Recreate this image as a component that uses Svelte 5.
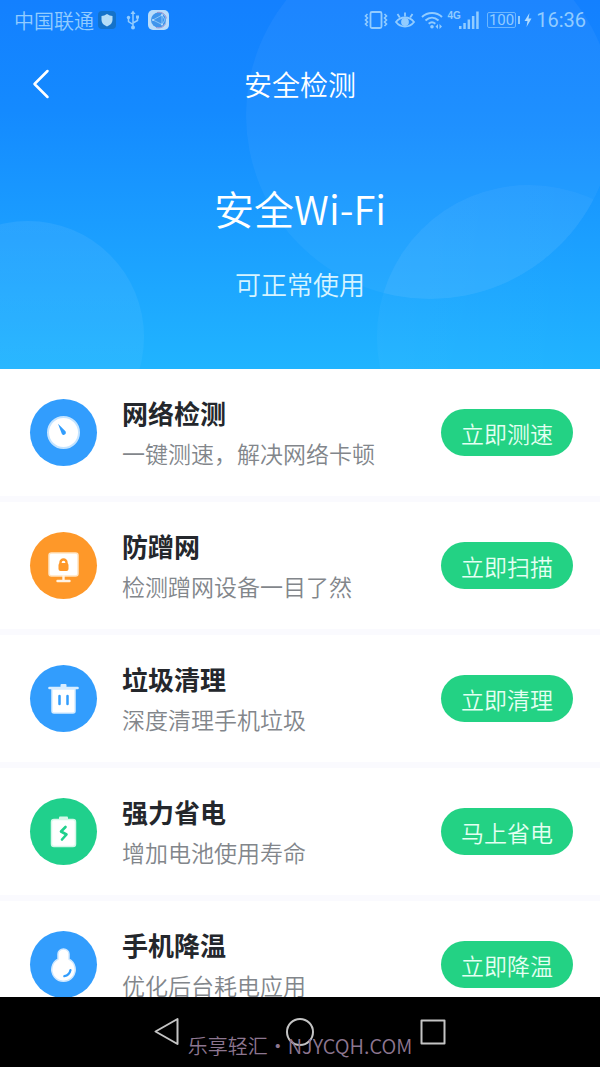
<script lang="ts">
	type Tool = {
		icon: string;
		color: string;
		title: string;
		desc: string;
		action: string;
	};

	const tools: Tool[] = [
		{ icon: 'gauge', color: '#329dfd', title: '网络检测', desc: '一键测速，解决网络卡顿', action: '立即测速' },
		{ icon: 'monitor', color: '#fe9829', title: '防蹭网', desc: '检测蹭网设备一目了然', action: '立即扫描' },
		{ icon: 'trash', color: '#329dfd', title: '垃圾清理', desc: '深度清理手机垃圾', action: '立即清理' },
		{ icon: 'battery', color: '#20d08c', title: '强力省电', desc: '增加电池使用寿命', action: '马上省电' },
		{ icon: 'cooling', color: '#329dfd', title: '手机降温', desc: '优化后台耗电应用', action: '立即降温' }
	];
</script>

<div class="screen">
	<header class="hero">
		<svg class="bubbles" viewBox="0 0 600 369" preserveAspectRatio="xMidYMax slice" aria-hidden="true">
			<defs>
				<linearGradient id="fade" x1="0" y1="0" x2="0" y2="1">
					<stop offset="0" stop-color="#fff" stop-opacity="0.07" />
					<stop offset="1" stop-color="#fff" stop-opacity="0.03" />
				</linearGradient>
				<linearGradient id="fade-right" x1="0" y1="0" x2="1" y2="0">
					<stop offset="0" stop-color="#fff" stop-opacity="0.03" />
					<stop offset="0.7" stop-color="#fff" stop-opacity="0" />
				</linearGradient>
				<clipPath id="overlap">
					<circle cx="430" cy="115" r="184" />
				</clipPath>
			</defs>
			<circle cx="430" cy="115" r="184" fill="#fff" fill-opacity="0.045" />
			<circle cx="529" cy="337" r="152" fill="url(#fade-right)" />
			<circle cx="529" cy="337" r="152" fill="#fff" fill-opacity="0.035" clip-path="url(#overlap)" />
			<circle cx="28" cy="337" r="116" fill="url(#fade)" />
		</svg>

		<div class="status-bar">
			<div class="status-group">
				<span class="carrier">中国联通</span>
				<svg width="18" height="20" viewBox="0 0 18 20" aria-hidden="true">
					<rect x="0" y="1" width="18" height="18" rx="4" fill="#1472c9" />
					<path d="M9 4c2 1.400 3.500 1.800 5.500 1.900V10c0 3-2.200 5.200-5.500 6.500C5.700 15.200 3.500 13 3.500 10V5.900C5.500 5.800 7 5.400 9 4z" fill="#b4ddf8" />
				</svg>
				<svg class="usb" width="14" height="20" viewBox="0 0 14 20" fill="none" stroke="#92ccff" stroke-width="1.500" aria-hidden="true">
					<path d="M7 3v14M7 14.500 2.500 11.500V8M7 13l4.500-2.500V8" />
					<path d="M4.500 4 7 0.500 9.500 4z" fill="#92ccff" stroke="none" />
					<circle cx="7" cy="17.500" r="2" fill="#92ccff" stroke="none" />
					<circle cx="2.500" cy="7.500" r="1.700" fill="#92ccff" stroke="none" />
					<path d="M10 5.500h3v3h-3z" fill="#92ccff" stroke="none" />
				</svg>
				<svg width="21" height="20" viewBox="0 0 21 20" aria-hidden="true">
					<rect width="21" height="20" rx="5" fill="#b9ddfb" />
					<circle cx="10.500" cy="10" r="7.500" fill="#3f95ec" />
					<path d="M5 10 14 5v9.500zM14 5l3 5-3 4.500" fill="none" stroke="#9bd0fb" stroke-width="0.800" />
					<path d="M9 2.500c5-1 9 2 9.300 6M8 17.500c4 1.200 8-.5 9.500-4" fill="none" stroke="#9a8ecb" stroke-width="1" />
					<g fill="#b9ddfb">
						<circle cx="5" cy="10" r="1" />
						<circle cx="14" cy="5" r="1" />
						<circle cx="14" cy="14.500" r="1" />
					</g>
				</svg>
			</div>

			<div class="status-group">
				<svg width="24" height="20" viewBox="0 0 24 20" fill="none" stroke="#92ccff" stroke-width="1.800" aria-hidden="true">
					<rect x="6.500" y="2" width="11" height="16" rx="1.500" />
					<path d="M3.500 4 1.500 6l2 2-2 2 2 2-2 2 2 2M20.500 4l2 2-2 2 2 2-2 2 2 2-2 2" stroke-width="1.600" />
				</svg>
				<svg class="eye" width="20" height="20" viewBox="0 0 20 20" fill="none" stroke="#92ccff" stroke-width="1.800" aria-hidden="true">
					<path d="M1 12c4.500-6 13.500-6 18 0-4.500 6-13.500 6-18 0z" />
					<circle cx="10" cy="12" r="3" fill="#92ccff" />
					<path d="M10 6.500V2.500M4.800 7.500 2.500 4M15.200 7.500 17.500 4" />
				</svg>
				<svg width="22" height="20" viewBox="0 0 22 20" fill="none" stroke="#92ccff" stroke-width="2" aria-hidden="true">
					<path d="M1 7c5.500-5.300 14.500-5.300 20 0M4.500 10.500c4-3.700 9-3.700 13 0M7.700 13.800c2-2 4.500-2 6.600 0" />
					<circle cx="11" cy="16.700" r="1.800" fill="#92ccff" stroke="none" />
					<path d="M17 14 14.500 16.500l2.500 2.500zM18.500 14l2.500 2.500-2.500 2.500z" fill="#92ccff" stroke="none" />
				</svg>
				<div class="signal">
					<span class="network">4G</span>
					<svg width="20" height="20" viewBox="0 0 20 20" fill="#92ccff" aria-hidden="true">
						<path d="M0 16h2.500v3H0zM4.300 13h2.500v6H4.300zM8.600 9.500h2.500V19H8.600zM12.900 6h2.500v13h-2.500zM17.200 1.500h2.500V19h-2.500z" />
					</svg>
				</div>
				<div class="battery">
					<span class="level">100</span>
					<span class="cap"></span>
				</div>
				<svg class="bolt" width="8" height="16" viewBox="0 0 8 16" fill="#b0dbff" aria-hidden="true">
					<path d="M5.500 1 .5 9h3L2.500 15l5-8.500h-3z" />
				</svg>
				<time class="clock">16:36</time>
			</div>
		</div>

		<div class="title-bar">
			<button class="back" type="button" aria-label="返回">
				<svg width="18" height="30" viewBox="0 0 18 30" fill="none" stroke="#fff" stroke-width="2.500" stroke-linecap="round" stroke-linejoin="round" aria-hidden="true">
					<path d="M15.500 2 2.500 15 15.500 28" />
				</svg>
			</button>
			<h1>安全检测</h1>
		</div>

		<div class="network-state">
			<p class="ssid">安全Wi-Fi</p>
			<p class="usable">可正常使用</p>
		</div>
	</header>

	<main class="tools">
		{#each tools as tool}
			<section class="tool">
				<div class="tool-icon" style="background-color: {tool.color}">
					<svg width="34" height="34" viewBox="0 0 34 34" aria-hidden="true">
						{#if tool.icon === 'gauge'}
							<circle cx="16.500" cy="16.500" r="15.500" fill="#fff" stroke="#c5e4ff" stroke-width="2" />
							<path d="M11 7.700 18.200 15.100a2.200 2.200 0 1 1-3.700 2z" fill="#329dfd" />
						{:else if tool.icon === 'monitor'}
							<rect x="2" y="4" width="29" height="23" rx="2.500" fill="#fff" stroke="#ffe5c4" stroke-width="1.500" />
							<path d="M16.500 27v4.500M10.500 32h12" stroke="#fff3e3" stroke-width="2.400" stroke-linecap="round" />
							<path d="M13.500 15v-1.500a3 3 0 0 1 6 0V15" fill="none" stroke="#fe9829" stroke-width="2.400" />
							<rect x="11.500" y="14" width="10" height="8" rx="2" fill="#fe9829" />
						{:else if tool.icon === 'trash'}
							<path d="M13.500 5V3q0-1 1-1h4q1 0 1 1v2z" fill="#d8edff" />
							<path d="M2.500 6h28" stroke="#d8edff" stroke-width="2.600" stroke-linecap="round" />
							<path d="M5 7h23v22q0 2-2 2H7q-2 0-2-2z" fill="#fff" stroke="#d8edff" stroke-width="1.500" />
							<path d="M12.500 14v8M20.500 14v8" stroke="#329dfd" stroke-width="2.500" stroke-linecap="round" />
						{:else if tool.icon === 'battery'}
							<path d="M12 5V2.500q0-1 1-1h7q1 0 1 1V5z" fill="#d6f7e9" />
							<rect x="4.500" y="4.500" width="24" height="27" rx="2.500" fill="#fff" stroke="#d6f7e9" stroke-width="1.500" />
							<path d="M18.500 12 14 16.500 19.500 19.500 15 24.500" fill="none" stroke="#20d08c" stroke-width="2.600" stroke-linecap="round" stroke-linejoin="round" />
						{:else}
							<path d="M11 11.200V6a5.500 5 0 0 1 11 0v5.200a11.700 11.700 0 1 1-11 0z" fill="#fff" stroke="#cfe8ff" stroke-width="1.500" />
							<path d="M23.500 22c-.7 3.500-2.700 5.500-6.200 6.200" fill="none" stroke="#329dfd" stroke-width="2.200" stroke-linecap="round" />
						{/if}
					</svg>
				</div>
				<div class="tool-text">
					<h2>{tool.title}</h2>
					<p>{tool.desc}</p>
				</div>
				<button class="action" type="button">{tool.action}</button>
			</section>
		{/each}
	</main>

	<nav class="nav-bar">
		<button type="button" aria-label="返回">
			<svg width="28" height="30" viewBox="0 0 28 30" aria-hidden="true">
				<path d="M24.500 2v25L2.500 14.500z" />
			</svg>
		</button>
		<button type="button" aria-label="主屏幕">
			<svg width="30" height="30" viewBox="0 0 30 30" aria-hidden="true">
				<circle cx="15" cy="15" r="13" />
			</svg>
		</button>
		<button type="button" aria-label="最近任务">
			<svg width="28" height="28" viewBox="0 0 28 28" aria-hidden="true">
				<rect x="2.500" y="2.500" width="23" height="23" />
			</svg>
		</button>
		<span class="watermark">乐享轻汇・NJYCQH.COM</span>
	</nav>
</div>

<style>
	:global(body) {
		margin: 0;
	}

	.screen {
		display: flex;
		flex-direction: column;
		height: 100vh;
		overflow: hidden;
		background-color: #fff;
		font-family: 'Noto Sans CJK SC', sans-serif;
		font-weight: 350;
	}

	h1,
	h2,
	p {
		margin: 0;
	}

	button {
		display: flex;
		align-items: center;
		justify-content: center;
		padding: 0;
		border: none;
		background: none;
		font: inherit;
		cursor: pointer;
	}

	.hero {
		position: relative;
		flex-shrink: 0;
		padding-bottom: 65px;
		background: linear-gradient(#1380ff 0%, #148aff 30%, #1b9fff 65%, #20b4ff 100%);
		color: #fff;
	}

	.bubbles {
		position: absolute;
		inset: 0;
		width: 100%;
		height: 100%;
	}

	.status-bar,
	.title-bar,
	.network-state {
		position: relative;
	}

	.status-bar {
		display: flex;
		align-items: center;
		justify-content: space-between;
		height: 40px;
		padding: 0 14px;
		color: #92ccff;
	}

	.status-group {
		display: flex;
		align-items: center;
	}

	.carrier {
		margin-right: 4px;
		font-size: 20px;
	}

	.usb {
		margin: 0 8px 0 10px;
	}

	.eye {
		margin: 0 6px 0 7px;
	}

	.signal {
		display: flex;
		margin: 0 8px 0 5px;
	}

	.network {
		margin-right: -2px;
		font: 700 10px/12px 'Liberation Sans', sans-serif;
	}

	.battery {
		display: flex;
		align-items: center;
		gap: 2px;
		margin-right: 4px;
	}

	.level {
		padding: 0 1px;
		border: 1px solid #6ab6ff;
		border-radius: 2px;
		font: 400 15px/14px Roboto, sans-serif;
	}

	.cap {
		width: 2px;
		height: 8px;
		background-color: #92ccff;
	}

	.bolt {
		margin-right: 4px;
	}

	.clock {
		font: 400 20px/24px Roboto, sans-serif;
	}

	.title-bar {
		display: grid;
		grid-template-columns: 50px 1fr 50px;
		align-items: center;
		height: 88px;
		padding: 0 16px;
	}

	.back {
		height: 48px;
	}

	h1 {
		font-size: 28px;
		font-weight: inherit;
		text-align: center;
	}

	.network-state {
		padding-top: 50px;
		text-align: center;
	}

	.ssid {
		font-size: 40px;
		line-height: 60px;
	}

	.usable {
		margin-top: 26px;
		color: #d6f4ff;
		font-size: 26px;
		line-height: 40px;
	}

	.tools {
		display: flex;
		flex: 1;
		flex-direction: column;
		gap: 6px;
		min-height: 0;
		overflow: hidden;
		background-color: #fafafe;
	}

	.tool {
		display: flex;
		flex-shrink: 0;
		align-items: center;
		gap: 25px;
		box-sizing: border-box;
		min-height: 127px;
		padding: 0 27px 0 30px;
		background-color: #fff;
	}

	.tool-icon {
		display: flex;
		flex-shrink: 0;
		align-items: center;
		justify-content: center;
		width: 67px;
		height: 67px;
		border-radius: 50%;
	}

	.tool-text {
		flex: 1;
	}

	.tool-text h2 {
		color: #24272c;
		font-size: 26px;
		font-weight: 700;
		line-height: 40px;
	}

	.tool-text p {
		color: #82868b;
		font-size: 23px;
		line-height: 40px;
	}

	.action {
		flex-shrink: 0;
		height: 47px;
		padding: 0 20px;
		border-radius: 24px;
		background-color: #23d284;
		color: #e4fff2;
		font-size: 23px;
	}

	.nav-bar {
		position: relative;
		display: grid;
		flex-shrink: 0;
		grid-template-columns: repeat(3, 1fr);
		height: 70px;
		padding: 0 100px;
		background-color: #000;
	}

	.nav-bar svg {
		fill: none;
		stroke: #c4c4c4;
		stroke-width: 2;
		stroke-linejoin: round;
	}

	.watermark {
		position: absolute;
		bottom: 6px;
		left: 0;
		width: 100%;
		color: #8d7690;
		font-size: 20px;
		line-height: 30px;
		text-align: center;
		pointer-events: none;
	}
</style>
